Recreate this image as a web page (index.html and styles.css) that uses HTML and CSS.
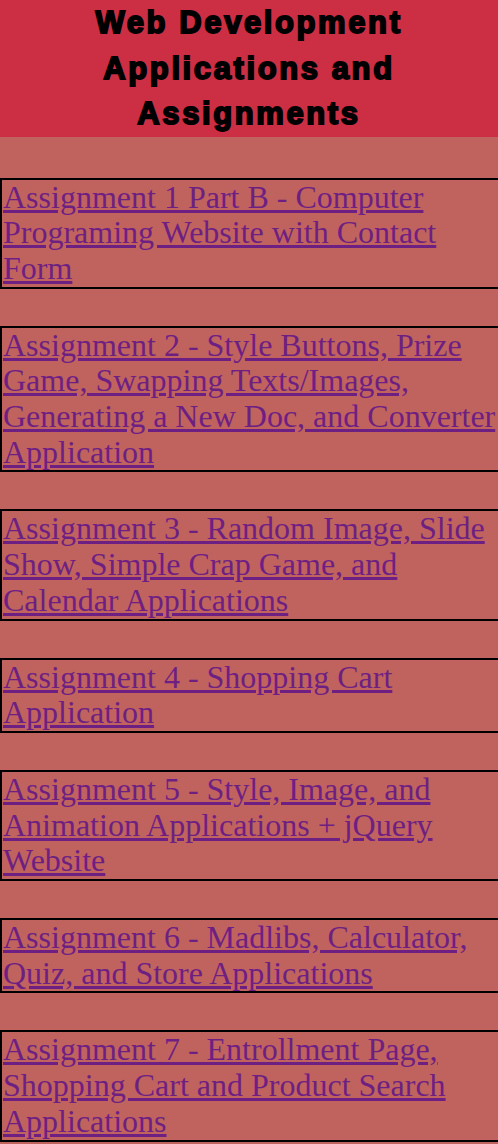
FILE: index.html
```html
<!DOCTYPE html>
<html>
<head>
<meta charset="utf-8">
<title>Web Development Applications and Assignments</title>
<link rel="stylesheet" href="styles.css">
</head>
<body>
<header class="banner">
  <h1 class="title">Web Development Applications and Assignments</h1>
</header>
<main class="list">
  <div class="item"><a href="#">Assignment 1 Part B - Computer Programing Website with Contact Form</a></div>
  <div class="item"><a href="#">Assignment 2 - Style Buttons, Prize Game, Swapping Texts/Images, Generating a New Doc, and Converter Application</a></div>
  <div class="item"><a href="#">Assignment 3 - Random Image, Slide Show, Simple Crap Game, and Calendar Applications</a></div>
  <div class="item"><a href="#">Assignment 4 - Shopping Cart Application</a></div>
  <div class="item"><a href="#">Assignment 5 - Style, Image, and Animation Applications + jQuery Website</a></div>
  <div class="item"><a href="#">Assignment 6 - Madlibs, Calculator, Quiz, and Store Applications</a></div>
  <div class="item"><a href="#">Assignment 7 - Entrollment Page, Shopping Cart and Product Search Applications</a></div>
</main>
</body>
</html>
```
FILE: styles.css
```css
html, body {
  margin: 0;
  padding: 0;
}
body {
  background: #c0635f;
  overflow: hidden;
}
.banner {
  background: #cc2f43;
  text-align: center;
}
.title {
  margin: 0 auto;
  max-width: 360px;
  font-family: "Liberation Sans", Arial, sans-serif;
  font-weight: 900;
  font-size: 31px;
  line-height: 45.5px;
  color: #000;
  -webkit-text-stroke: 1.8px #000;
  letter-spacing: 2.6px;
}
.list {
  display: flex;
  flex-direction: column;
  gap: 37px;
  padding-top: 41px;
}
.item {
  border: 2px solid #000;
  border-right: none;
  padding-left: 1px;
  font-family: "Liberation Serif", "Times New Roman", serif;
  font-size: 32px;
  line-height: 35.7px;
}
.item a {
  color: #6e1f82;
  text-decoration: underline;
}
```
